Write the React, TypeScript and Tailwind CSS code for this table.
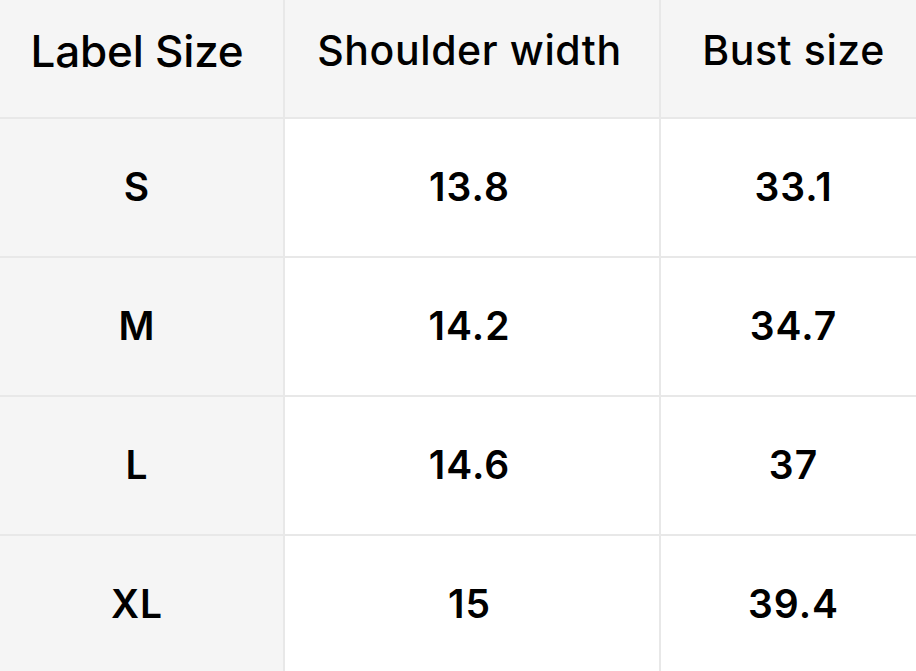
import React from "react";

const rows = [
  ["S", "13.8", "33.1"],
  ["M", "14.2", "34.7"],
  ["L", "14.6", "37"],
  ["XL", "15", "39.4"],
];

export default function App() {
  return (
    <div
      className="w-[916px] h-[671px] overflow-hidden bg-white text-black"
      style={{ fontFamily: "Inter, 'Noto Sans', sans-serif" }}
    >
      <div className="grid grid-cols-[285px_376px_255px]">
        <div className="h-[119px] bg-[#f5f5f5] border-r-2 border-b-2 border-[#e8e8e8] flex items-center justify-center pr-[9px] pb-[16px] text-[44px] font-medium tracking-[-0.2px]">
          Label Size
        </div>
        <div className="h-[119px] bg-[#f5f5f5] border-r-2 border-b-2 border-[#e8e8e8] flex items-center justify-center pr-[5px] pb-[16px] text-[41px] font-medium tracking-[0.6px]">
          Shoulder width
        </div>
        <div className="h-[119px] bg-[#f5f5f5] border-b-2 border-[#e8e8e8] flex items-center justify-center pl-[10px] pb-[16px] text-[41px] font-medium tracking-[0.6px]">
          Bust size
        </div>
        {rows.map((r, i) => (
          <React.Fragment key={i}>
            <div className="h-[139px] bg-[#f5f5f5] border-r-2 border-b-2 border-[#e8e8e8] flex items-center justify-center pr-[9px] text-[39px] font-semibold tracking-[1px]">
              {r[0]}
            </div>
            <div className="h-[139px] bg-white border-r-2 border-b-2 border-[#e8e8e8] flex items-center justify-center pr-[5px] text-[39px] font-semibold tracking-[1px]">
              {r[1]}
            </div>
            <div className="h-[139px] bg-white border-b-2 border-[#e8e8e8] flex items-center justify-center pl-[10px] text-[39px] font-semibold tracking-[1px]">
              {r[2]}
            </div>
          </React.Fragment>
        ))}
      </div>
    </div>
  );
}
